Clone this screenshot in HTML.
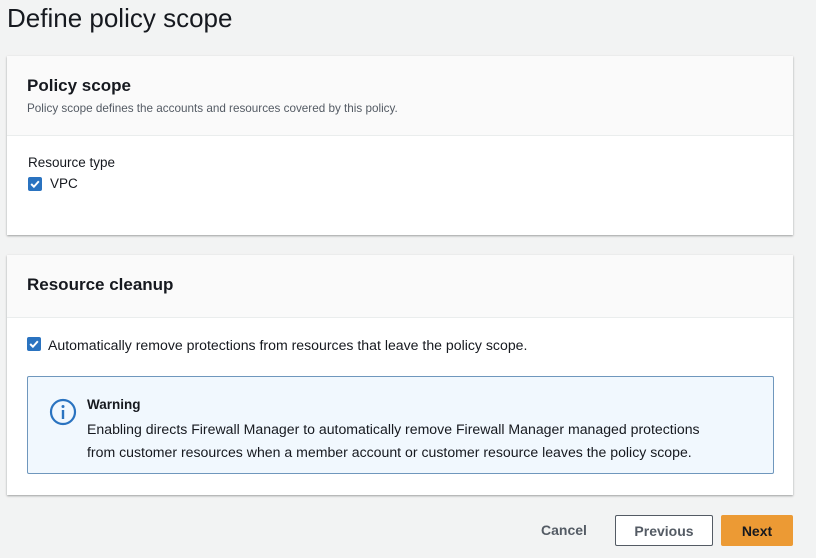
<!DOCTYPE html>
<html><head><meta charset="utf-8"><style>
*{box-sizing:border-box;margin:0;padding:0}
body{width:816px;height:558px;background:#f2f3f3;font-family:"Liberation Sans",sans-serif;color:#16191f;position:relative;overflow:hidden}
.abs{position:absolute}
.card{position:absolute;left:7px;width:786px;background:#fff;box-shadow:0 1px 2px rgba(0,0,0,.35);}
.hdr{background:#fafafa;border-bottom:1px solid #eaeded}
.cb{position:absolute;width:14px;height:14px;background:#2a73c0;border-radius:2px}
.cb svg{position:absolute;left:1px;top:1px}
.btn{position:absolute;height:32px;font-weight:bold;font-size:14px;display:flex;align-items:center;justify-content:center;border-radius:2px}
</style></head><body>
<div class="abs" style="left:7px;top:3px;font-size:26px;">Define policy scope</div>

<div class="card" style="top:56px;height:179px">
  <div class="hdr" style="height:80px"></div>
  <div class="abs" style="left:20px;top:20px;font-size:17px;font-weight:bold">Policy scope</div>
  <div class="abs" style="left:20px;top:46px;font-size:11.7px;color:#545b64">Policy scope defines the accounts and resources covered by this policy.</div>
  <div class="abs" style="left:21px;top:99px;font-size:13.5px">Resource type</div>
  <div class="cb" style="left:21px;top:121px"><svg width="12" height="12" viewBox="0 0 11 11"><path d="M2 5.5l2.5 2.5 4.5-5" stroke="#fff" stroke-width="1.8" fill="none"/></svg></div>
  <div class="abs" style="left:43px;top:120px;font-size:13.5px">VPC</div>
</div>

<div class="card" style="top:255px;height:240px">
  <div class="hdr" style="height:63px"></div>
  <div class="abs" style="left:20px;top:20px;font-size:17px;font-weight:bold">Resource cleanup</div>
  <div class="cb" style="left:20px;top:82px"><svg width="12" height="12" viewBox="0 0 11 11"><path d="M2 5.5l2.5 2.5 4.5-5" stroke="#fff" stroke-width="1.8" fill="none"/></svg></div>
  <div class="abs" style="left:41px;top:82px;font-size:14.1px">Automatically remove protections from resources that leave the policy scope.</div>
  <div class="abs" style="left:20px;top:121px;width:747px;height:98px;background:#f1f8fe;border:1px solid #6f97bd;border-radius:2px">
    <svg class="abs" style="left:21px;top:21px" width="28" height="28" viewBox="0 0 28 28"><circle cx="14" cy="14" r="12" fill="none" stroke="#2a73c0" stroke-width="2.2"/><rect x="12.8" y="12" width="2.4" height="9" fill="#2a73c0"/><circle cx="14" cy="8.5" r="1.5" fill="#2a73c0"/></svg>
    <div class="abs" style="left:59px;top:20px;font-size:13.5px;font-weight:bold">Warning</div>
    <div class="abs" style="left:59px;top:41px;font-size:14.1px;line-height:23px;width:700px">Enabling directs Firewall Manager to automatically remove Firewall Manager managed protections<br>from customer resources when a member account or customer resource leaves the policy scope.</div>
  </div>
</div>

<div class="btn" style="left:530px;top:514px;width:68px;color:#545b64">Cancel</div>
<div class="btn" style="left:615px;top:515px;width:98px;height:31px;background:#fff;border:1px solid #545b64;color:#545b64">Previous</div>
<div class="btn" style="left:721px;top:515px;width:72px;height:31px;background:#ec9a34;color:#16191f">Next</div>
</body></html>
